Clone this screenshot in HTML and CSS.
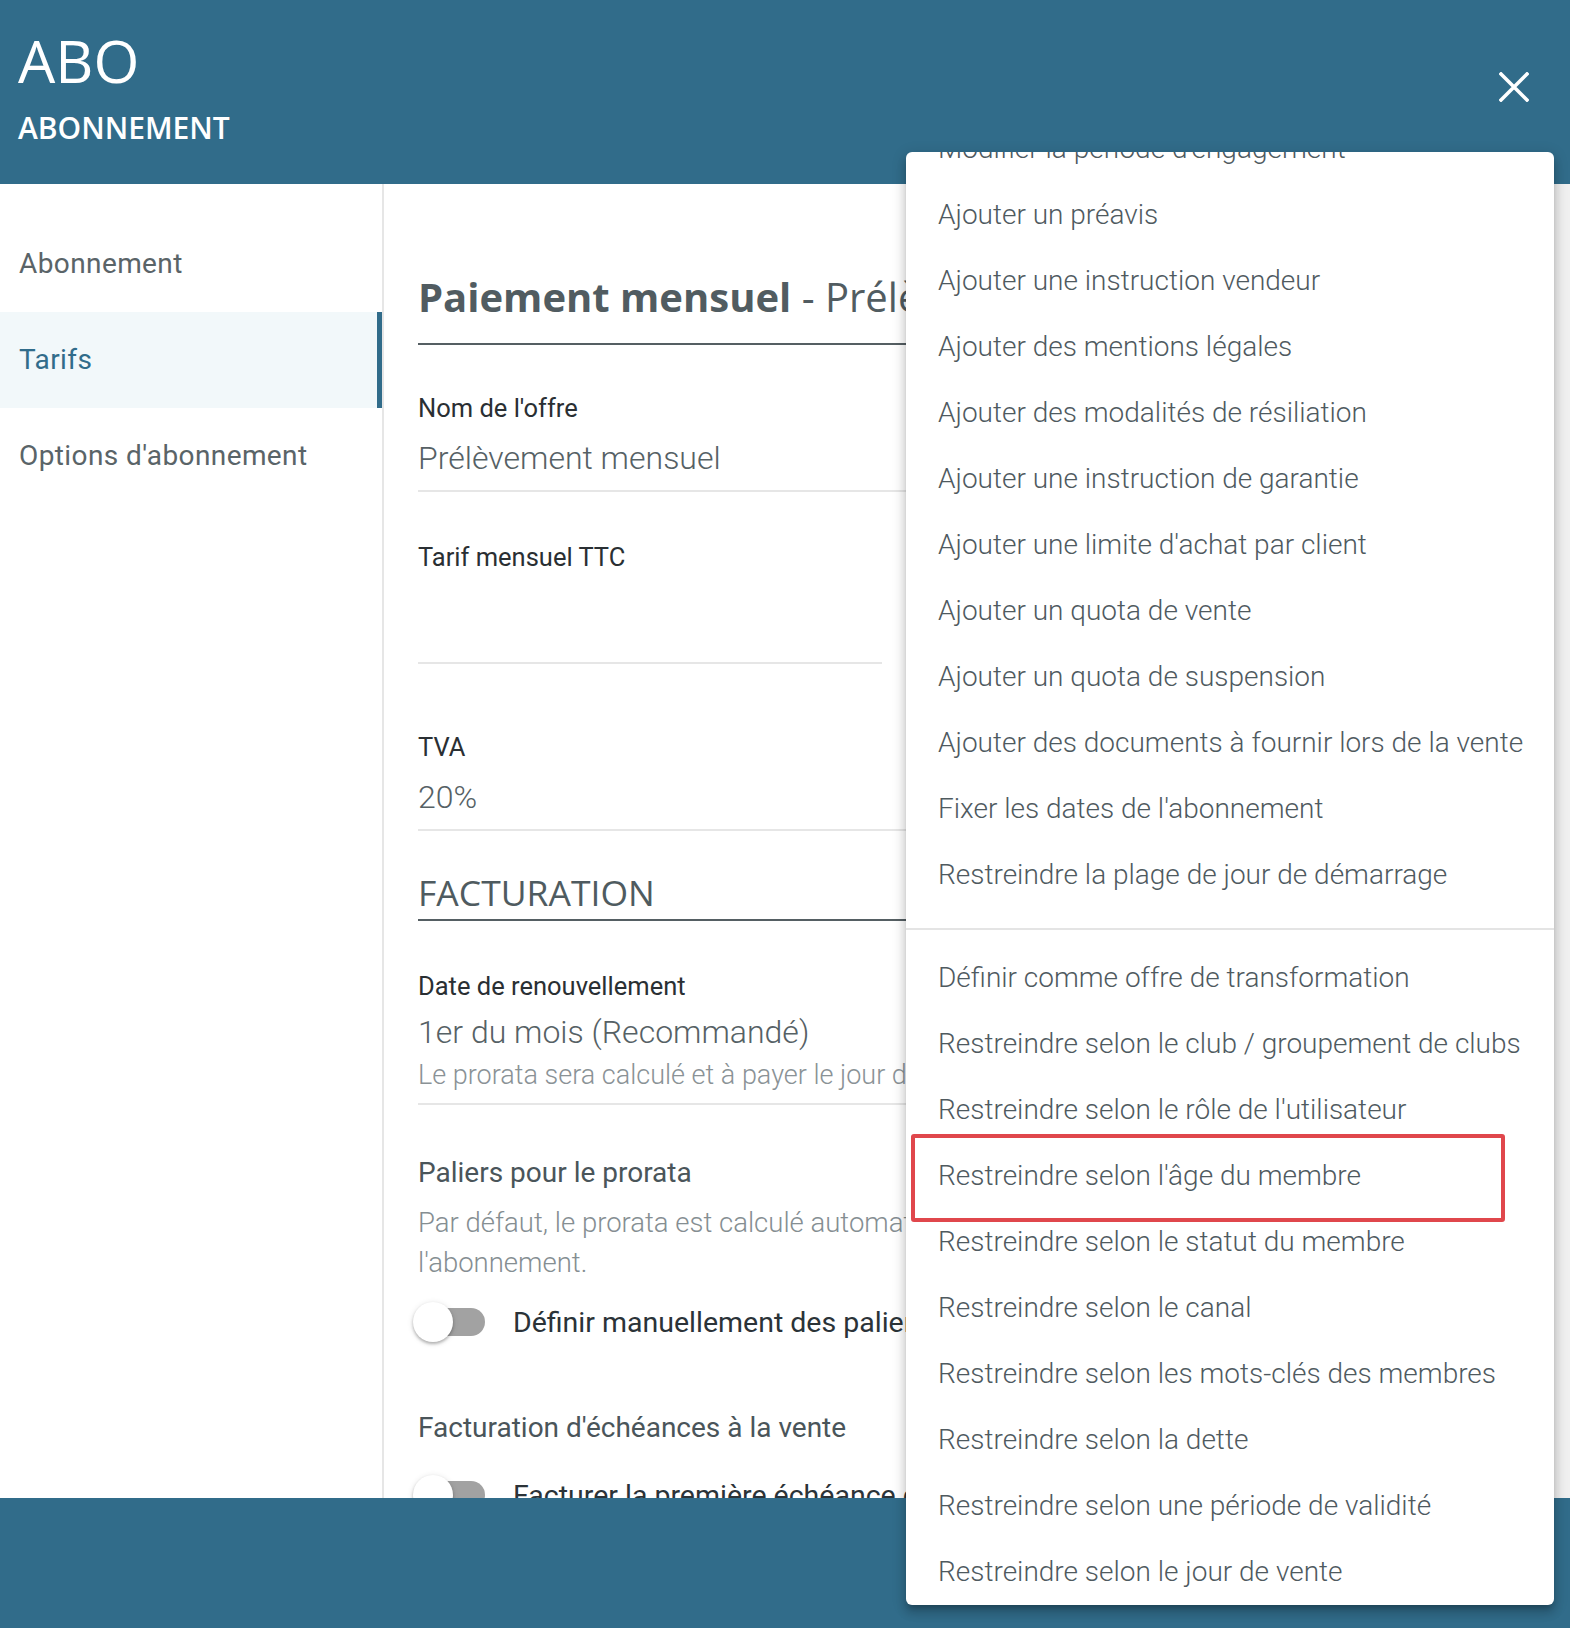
FILE: index.html
```html
<!DOCTYPE html>
<html lang="fr">
<head>
  <meta charset="UTF-8">
  <title>ABO - Abonnement</title>
  <link rel="stylesheet" href="styles.css">
</head>
<body>
  <div class="dialog">
    <header class="dialog-head">
      <div class="titles">
        <div class="code">ABO</div>
        <div class="kind">ABONNEMENT</div>
      </div>
      <button class="close" aria-label="Fermer">
        <svg width="30" height="30" viewBox="0 0 30 30">
          <path d="M2 2 L28 28 M28 2 L2 28" stroke="#fff" stroke-width="3.6" stroke-linecap="square" fill="none"/>
        </svg>
      </button>
    </header>

    <div class="dialog-body">
      <nav class="side">
        <a class="side-item">Abonnement</a>
        <a class="side-item active">Tarifs</a>
        <a class="side-item">Options d'abonnement</a>
      </nav>

      <main class="content">
        <h1 class="offer-title"><b>Paiement mensuel</b> - Prélèvement mensuel</h1>

        <div class="field">
          <label>Nom de l'offre</label>
          <div class="value">Prélèvement mensuel</div>
        </div>

        <div class="field narrow">
          <label>Tarif mensuel TTC</label>
          <div class="value empty"></div>
        </div>

        <div class="field spaced">
          <label>TVA</label>
          <div class="value">20%</div>
        </div>

        <h2 class="section-title">FACTURATION</h2>

        <div class="field first">
          <label>Date de renouvellement</label>
          <div class="value with-hint">1er du mois (Recommandé)</div>
          <div class="hint">Le prorata sera calculé et à payer le jour de la vente</div>
        </div>

        <div class="block">
          <h3 class="block-title">Paliers pour le prorata</h3>
          <p class="block-text">Par défaut, le prorata est calculé automatiquement en fonction du jour de début de<br>l'abonnement.</p>
          <div class="switch-row">
            <span class="switch"><span class="track"></span><span class="knob"></span></span>
            <span class="switch-label">Définir manuellement des paliers</span>
          </div>
        </div>

        <div class="block far">
          <h3 class="block-title">Facturation d'échéances à la vente</h3>
          <div class="switch-row tight">
            <span class="switch"><span class="track"></span><span class="knob"></span></span>
            <span class="switch-label">Facturer la première échéance dès la vente</span>
          </div>
        </div>
      </main>

      <div class="scroll-track"></div>
    </div>

    <footer class="dialog-foot"></footer>

    <!-- menu des options supplémentaires, déjà défilé -->
    <div class="menu">
      <ul class="menu-list">
        <li>Modifier la période d'engagement</li>
        <li>Ajouter un préavis</li>
        <li>Ajouter une instruction vendeur</li>
        <li>Ajouter des mentions légales</li>
        <li>Ajouter des modalités de résiliation</li>
        <li>Ajouter une instruction de garantie</li>
        <li>Ajouter une limite d'achat par client</li>
        <li>Ajouter un quota de vente</li>
        <li>Ajouter un quota de suspension</li>
        <li>Ajouter des documents à fournir lors de la vente</li>
        <li>Fixer les dates de l'abonnement</li>
        <li>Restreindre la plage de jour de démarrage</li>
      </ul>
      <hr class="menu-divider">
      <ul class="menu-list">
        <li>Définir comme offre de transformation</li>
        <li>Restreindre selon le club / groupement de clubs</li>
        <li>Restreindre selon le rôle de l'utilisateur</li>
        <li>Restreindre selon l'âge du membre</li>
        <li>Restreindre selon le statut du membre</li>
        <li>Restreindre selon le canal</li>
        <li>Restreindre selon les mots-clés des membres</li>
        <li>Restreindre selon la dette</li>
        <li>Restreindre selon une période de validité</li>
        <li>Restreindre selon le jour de vente</li>
      </ul>
    </div>
    <div class="item-highlight"></div>
  </div>
</body>
</html>
```

FILE: styles.css
```css
* {
  box-sizing: border-box;
}

body {
  margin: 0;
  font-family: 'Roboto', 'Liberation Sans', sans-serif;
  color: #4f5a5f;
  background: #fff;
}

.dialog {
  position: relative;
  height: 100vh;
  display: flex;
  flex-direction: column;
  overflow: hidden;
}

/* header */
.dialog-head {
  flex: 0 0 184px;
  background: #316c8a;
  color: #fff;
  display: flex;
  justify-content: space-between;
  align-items: flex-start;
  padding: 28px 36px 0 18px;
}

.code {
  font-family: 'Open Sans', sans-serif;
  font-size: 59px;
  font-weight: 400;
  line-height: 64px;
}

.kind {
  font-family: 'Open Sans', sans-serif;
  font-size: 30px;
  font-weight: 600;
  line-height: 36px;
  margin-top: 18px;
}

.close {
  width: 40px;
  height: 40px;
  margin-top: 39px;
  border: none;
  background: none;
  padding: 5px;
  cursor: pointer;
}

/* body */
.dialog-body {
  flex: 1;
  display: flex;
  min-height: 0;
}

.side {
  flex: 0 0 384px;
  border-right: 2px solid #e6e6e6;
  padding-top: 32px;
}

.side-item {
  display: block;
  height: 96px;
  line-height: 96px;
  padding-left: 19px;
  font-size: 28px;
  letter-spacing: 0.4px;
  color: #5a6468;
}

.side-item.active {
  background: #f2f8fa;
  color: #316c8a;
  box-shadow: inset -5px 0 0 #316c8a;
}

.content {
  flex: 1;
  overflow: hidden;
  padding: 85px 0 0 34px;
}

.scroll-track {
  flex: 0 0 16px;
  background: #f0f0f0;
}

.offer-title {
  margin: 0;
  width: 1100px;
  font-family: 'Open Sans', sans-serif;
  font-size: 40px;
  font-weight: 400;
  line-height: 56px;
  color: #515c61;
  padding-bottom: 18px;
  border-bottom: 2px solid #555f63;
  white-space: nowrap;
}

.offer-title b {
  font-weight: 700;
}

.field {
  width: 1100px;
  margin-top: 48px;
}

.field label {
  display: block;
  font-size: 25.5px;
  line-height: 30px;
  color: #2a2f33;
}

.field .value {
  margin-top: 15px;
  font-size: 32px;
  font-weight: 300;
  line-height: 40px;
  color: #566165;
  padding-bottom: 12px;
  border-bottom: 2px solid #e6e6e6;
}

.field.narrow {
  width: 464px;
  margin-top: 50px;
}

.field .value.empty {
  height: 92px;
  margin-top: 0;
}

.field.spaced {
  margin-top: 68px;
}

.field.first {
  margin-top: 50px;
}

.field .value.with-hint {
  margin-top: 11px;
  border-bottom: none;
  padding-bottom: 0;
}

.hint {
  font-size: 27px;
  font-weight: 300;
  line-height: 36px;
  color: #8a9296;
  margin-top: 5px;
  padding-bottom: 10px;
  border-bottom: 2px solid #e6e6e6;
  white-space: nowrap;
}

.section-title {
  margin: 41px 0 0;
  width: 1100px;
  font-family: 'Open Sans', sans-serif;
  font-size: 35.5px;
  font-weight: 400;
  line-height: 40px;
  color: #4f5b60;
  padding-bottom: 7px;
  border-bottom: 2px solid #555f63;
}

.block {
  margin-top: 50px;
}

.block.far {
  margin-top: 66px;
}

.block-title {
  margin: 0;
  font-size: 28px;
  font-weight: 400;
  line-height: 36px;
  color: #4a555a;
}

.block-text {
  margin: 12px 0 0;
  font-size: 27.5px;
  font-weight: 300;
  line-height: 40px;
  color: #858e92;
  white-space: nowrap;
}

.switch-row {
  display: flex;
  align-items: center;
  height: 44px;
  margin-top: 17px;
}

.switch-row.tight {
  margin-top: 27px;
}

.switch {
  position: relative;
  width: 74px;
  height: 44px;
  margin-left: -5px;
  flex: 0 0 74px;
}

.switch .track {
  position: absolute;
  left: 18px;
  top: 8px;
  width: 54px;
  height: 28px;
  border-radius: 14px;
  background: #a2a2a2;
}

.switch .knob {
  position: absolute;
  left: 0;
  top: 2px;
  width: 40px;
  height: 40px;
  border-radius: 50%;
  background: #fff;
  box-shadow: 0 2px 3px rgba(0, 0, 0, 0.25), 0 1px 6px rgba(0, 0, 0, 0.12);
}

.switch-label {
  margin-left: 26px;
  font-size: 28.5px;
  color: #2b3338;
  white-space: nowrap;
}

.dialog-foot {
  flex: 0 0 130px;
  background: #316c8a;
}

/* menu */
.menu {
  position: absolute;
  top: 152px;
  left: 906px;
  width: 648px;
  height: 1453px;
  background: #fff;
  border-radius: 6px;
  overflow: hidden;
  box-shadow: 0 5px 5px -3px rgba(0, 0, 0, 0.2), 0 8px 10px 1px rgba(0, 0, 0, 0.14), 0 3px 14px 2px rgba(0, 0, 0, 0.12);
}

.menu-list {
  list-style: none;
  margin: 0;
  padding: 0;
}

.menu-list:first-child {
  margin-top: -36px;
}

.menu-list li {
  height: 66px;
  line-height: 66px;
  padding-left: 32px;
  font-size: 28px;
  font-weight: 300;
  color: #4f5a5f;
  white-space: nowrap;
}

.menu-divider {
  margin: 20px 0 15px;
  border: none;
  border-top: 2px solid #e4e4e4;
}

.item-highlight {
  position: absolute;
  left: 911px;
  top: 1134px;
  width: 594px;
  height: 88px;
  border: 4px solid #e0474c;
  border-radius: 3px;
}
```
